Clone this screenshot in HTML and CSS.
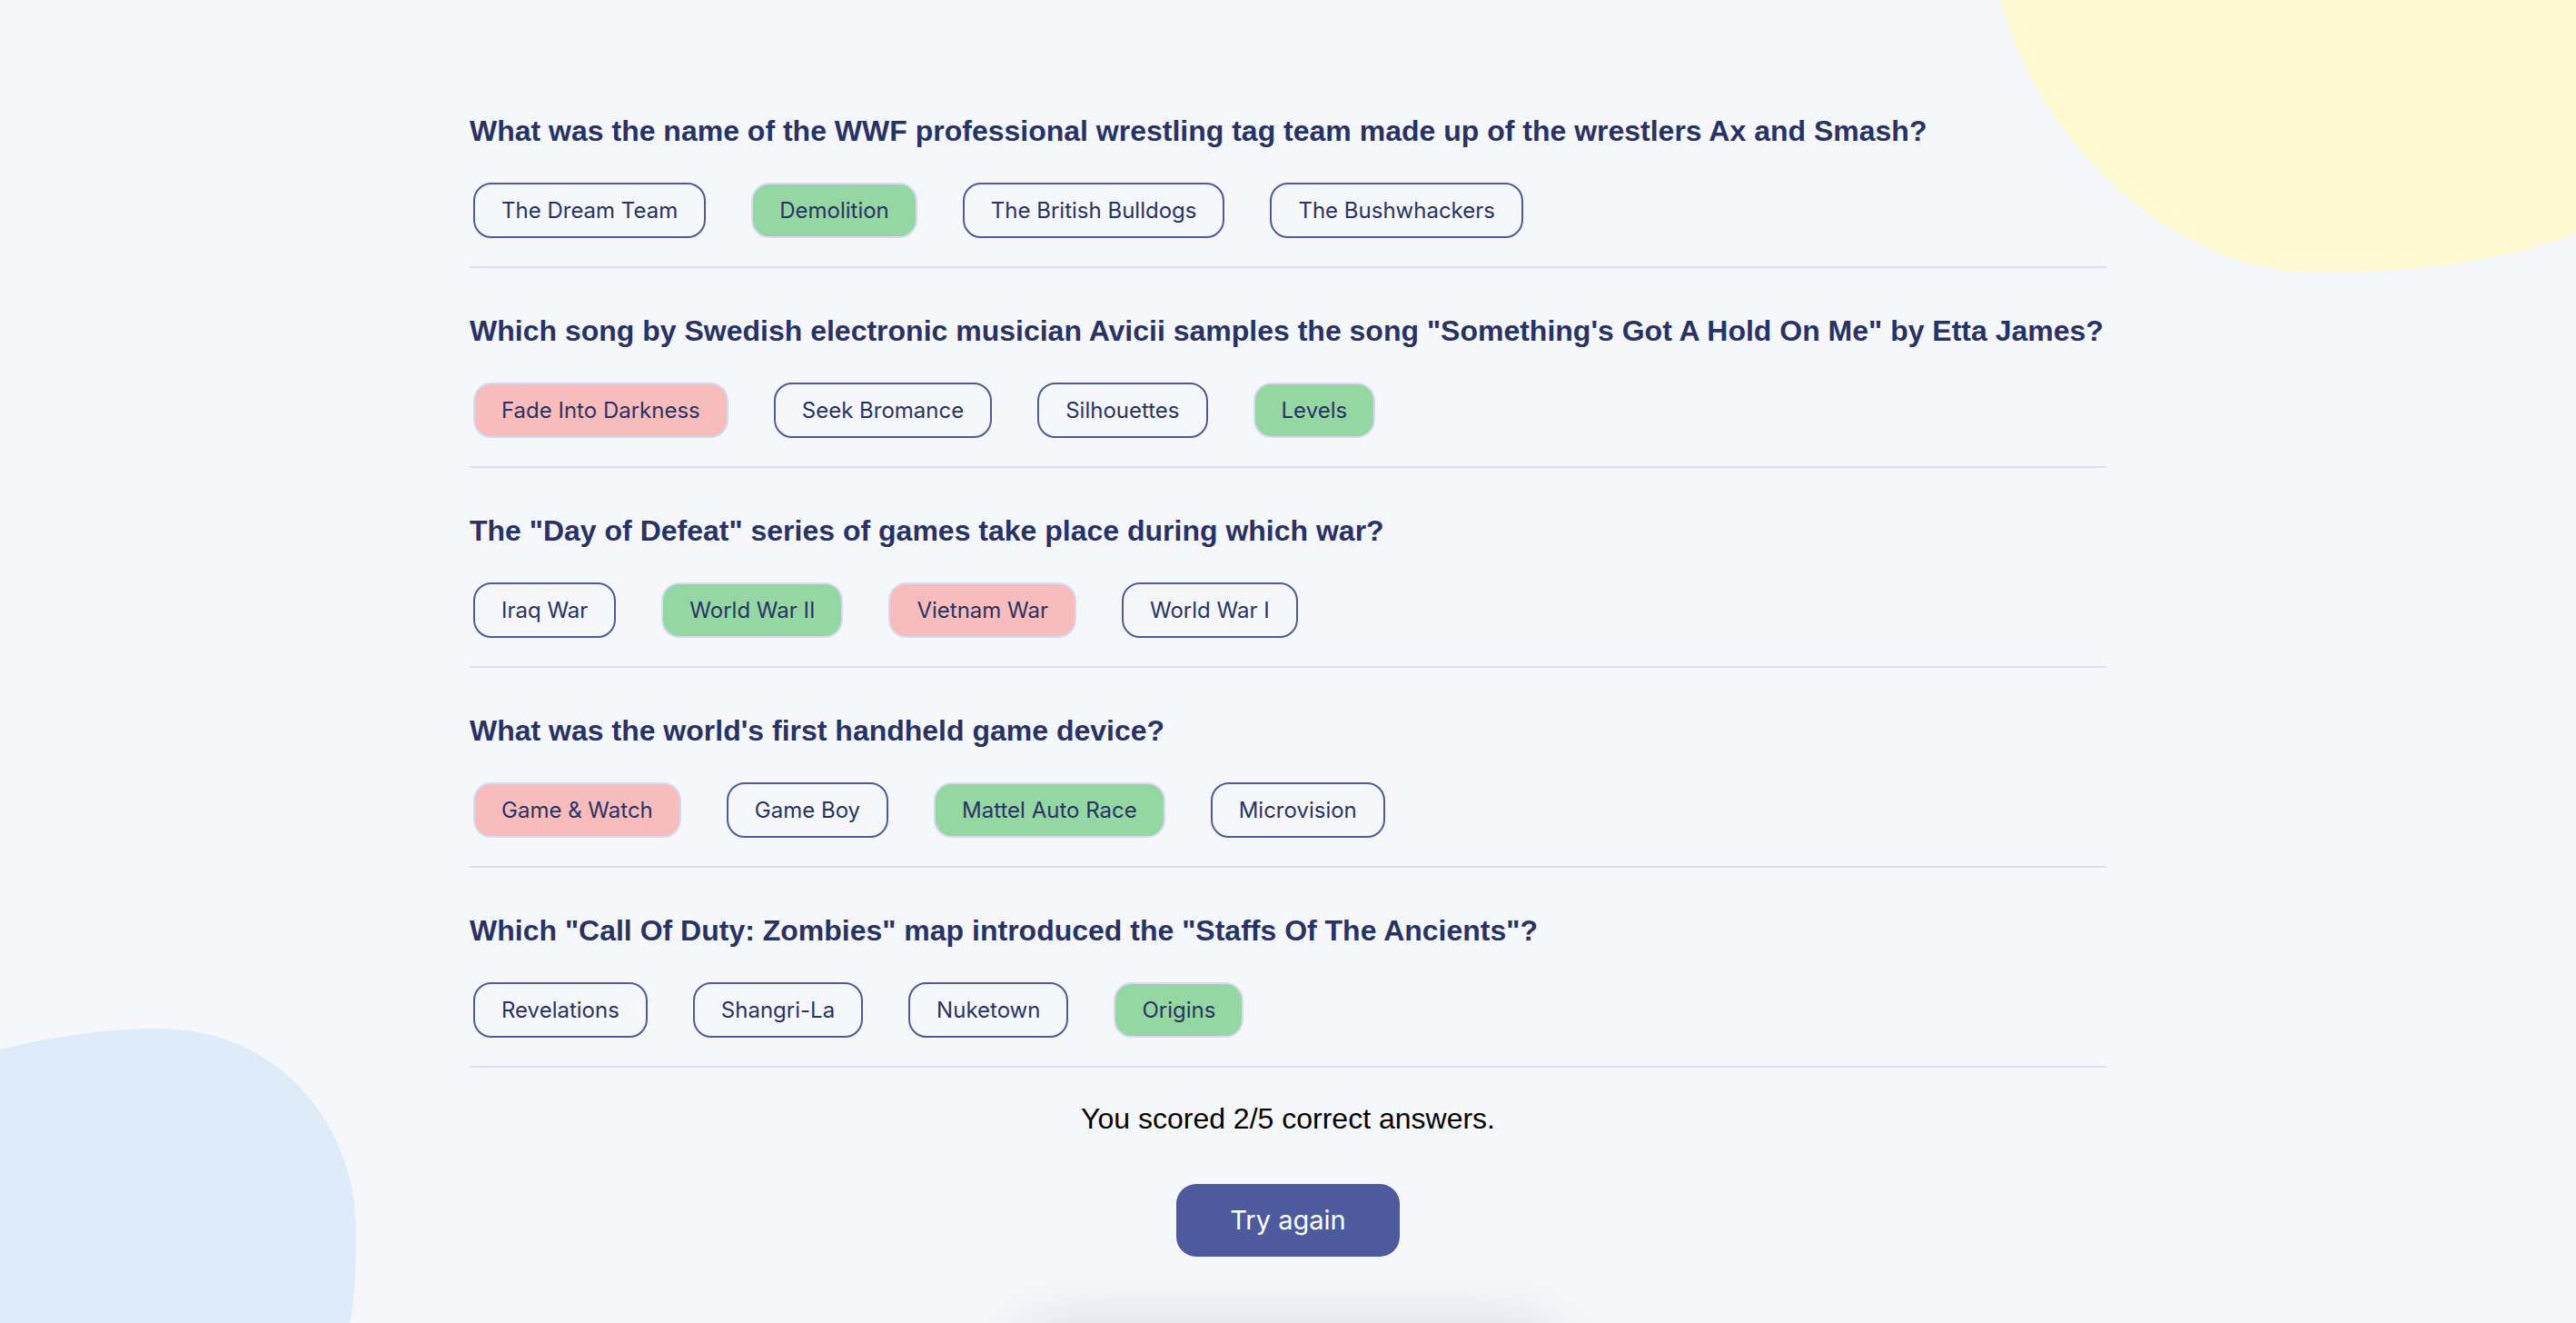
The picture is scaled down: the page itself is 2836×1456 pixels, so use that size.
FILE: index.html
```html
<!DOCTYPE html>
<html lang="en">
<head>
<meta charset="utf-8">
<title>Quizzical</title>
<link rel="stylesheet" href="styles.css">
</head>
<body>
<svg class="blob blob-yellow" width="634" height="300" viewBox="0 0 634 300" aria-hidden="true">
  <path d="M0,0 C48,170 198,300 350,300 C478,300 578,280 634,256 L634,0 Z" fill="#fffad1"/>
</svg>
<svg class="blob blob-blue" width="400" height="330" viewBox="0 1130 400 330" aria-hidden="true">
  <path d="M0,1155 C60,1140 120,1132 175,1132 C300,1132 392,1230 392,1357 C392,1400 390,1430 385,1460 L0,1460 Z" fill="#deebf8"/>
</svg>
<main class="quiz">
  <section class="question">
    <h2 class="question-title">What was the name of the WWF professional wrestling tag team made up of the wrestlers Ax and Smash?</h2>
    <div class="answers">
      <button class="answer">The Dream Team</button>
      <button class="answer correct">Demolition</button>
      <button class="answer">The British Bulldogs</button>
      <button class="answer">The Bushwhackers</button>
    </div>
  </section>
  <section class="question">
    <h2 class="question-title">Which song by Swedish electronic musician Avicii samples the song "Something's Got A Hold On Me" by Etta James?</h2>
    <div class="answers">
      <button class="answer wrong">Fade Into Darkness</button>
      <button class="answer">Seek Bromance</button>
      <button class="answer">Silhouettes</button>
      <button class="answer correct">Levels</button>
    </div>
  </section>
  <section class="question">
    <h2 class="question-title">The "Day of Defeat" series of games take place during which war?</h2>
    <div class="answers">
      <button class="answer">Iraq War</button>
      <button class="answer correct">World War II</button>
      <button class="answer wrong">Vietnam War</button>
      <button class="answer">World War I</button>
    </div>
  </section>
  <section class="question">
    <h2 class="question-title">What was the world's first handheld game device?</h2>
    <div class="answers">
      <button class="answer wrong">Game &amp; Watch</button>
      <button class="answer">Game Boy</button>
      <button class="answer correct">Mattel Auto Race</button>
      <button class="answer">Microvision</button>
    </div>
  </section>
  <section class="question last">
    <h2 class="question-title">Which "Call Of Duty: Zombies" map introduced the "Staffs Of The Ancients"?</h2>
    <div class="answers">
      <button class="answer">Revelations</button>
      <button class="answer">Shangri-La</button>
      <button class="answer">Nuketown</button>
      <button class="answer correct">Origins</button>
    </div>
  </section>
  <div class="result">
    <p class="score">You scored 2/5 correct answers.</p>
    <button class="retry">Try again</button>
    <div class="shadow-card"></div>
  </div>
</main>
</body>
</html>
```

FILE: styles.css
```css
html, body {
  margin: 0;
  padding: 0;
  overflow: hidden;
  height: 100%;
}

body {
  background: #f5f7fb;
  position: relative;
  font-family: "Liberation Sans", Arial, sans-serif;
}

.blob {
  position: absolute;
  z-index: 0;
  display: block;
}

.blob-yellow {
  top: 0;
  right: 0;
}

.blob-blue {
  left: 0;
  top: 1130px;
}

.quiz {
  position: relative;
  z-index: 1;
  width: 1802px;
  margin: 0 auto;
  padding-top: 126px;
}

.question {
  padding-bottom: 31px;
  border-bottom: 2px solid #dbdef0;
  margin-bottom: 51px;
}

.question.last {
  margin-bottom: 38px;
}

.question-title {
  margin: 0 0 39px;
  font-family: "Liberation Sans", Arial, sans-serif;
  font-weight: 700;
  font-size: 32px;
  line-height: 36px;
  color: #293264;
}

.answers {
  display: flex;
  gap: 50px;
  padding-left: 4px;
}

.answer {
  font-family: Inter, "Noto Sans", sans-serif;
  font-weight: 400;
  font-size: 24px;
  line-height: 29px;
  padding: 14px 29px;
  border: 2px solid #4d5b9e;
  border-radius: 20px;
  background: transparent;
  color: #293264;
  cursor: pointer;
}

.answer.correct {
  background: #94d7a2;
  border-color: #d6dbf5;
}

.answer.wrong {
  background: #f8bcbc;
  border-color: #d6dbf5;
}

.result {
  display: flex;
  flex-direction: column;
  align-items: center;
}

.score {
  margin: 0 0 53px;
  font-family: "Liberation Sans", Arial, sans-serif;
  font-size: 32px;
  line-height: 37px;
  color: #000;
}

.retry {
  font-family: Inter, "Noto Sans", sans-serif;
  font-weight: 400;
  font-size: 29px;
  line-height: 36px;
  padding: 22px 59px;
  border: none;
  border-radius: 22px;
  background: #4d5b9e;
  color: #fff;
  cursor: pointer;
}

.shadow-card {
  margin-top: 98px;
  width: 560px;
  height: 120px;
  background: #f5f7fb;
  border-radius: 30px;
  box-shadow: 0 0 70px 20px rgba(30, 30, 50, 0.14);
}
```
